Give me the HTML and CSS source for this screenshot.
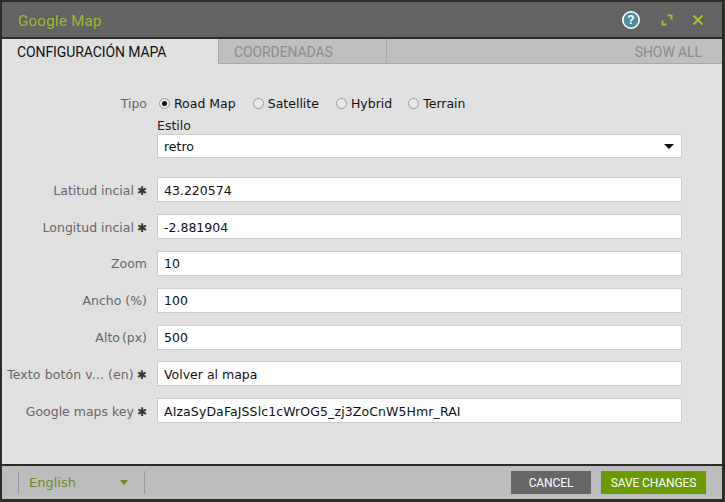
FILE: index.html
```html
<!DOCTYPE html>
<html lang="es">
<head>
<meta charset="utf-8">
<title>Google Map</title>
<link rel="stylesheet" href="styles.css">
</head>
<body>
<div class="dialog">
  <header class="head">
    <h1 class="title">Google Map</h1>
    <div class="tools">
      <svg class="help" width="20" height="20" viewBox="0 0 20 20"><circle cx="10" cy="10" r="8.2" fill="#4a8ea3" stroke="#fff" stroke-width="1.6"/><text x="10" y="14.4" text-anchor="middle" class="help-q">?</text></svg>
      <svg class="expand" width="12" height="12" viewBox="0 0 12 12"><path d="M6.5 1.5H10.5V5.5M1.5 6.5V10.5H5.5" fill="none" stroke="#a4c02f" stroke-width="2"/></svg>
      <svg class="close" width="12" height="12" viewBox="0 0 12 12"><path d="M1.5 1.5L10.5 10.5M10.5 1.5L1.5 10.5" fill="none" stroke="#a4c02f" stroke-width="2"/></svg>
    </div>
  </header>
  <nav class="tabs">
    <div class="tab active">CONFIGURACIÓN MAPA</div>
    <div class="tab other">COORDENADAS</div>
    <div class="showall">SHOW ALL</div>
  </nav>
  <main class="body">
    <div class="radios">
      <span class="lab">Tipo</span>
      <div class="radio-set">
        <span class="radio"><i class="dot on"></i>Road Map</span>
        <span class="radio"><i class="dot"></i>Satellite</span>
        <span class="radio"><i class="dot"></i>Hybrid</span>
        <span class="radio"><i class="dot"></i>Terrain</span>
      </div>
    </div>
    <div class="estilo">
      <div class="estilo-label">Estilo</div>
      <div class="select"><span>retro</span><i class="caret"></i></div>
    </div>
    <div class="fields">
      <div class="row"><span class="lab">Latitud incial<b class="req">✱</b></span><div class="input">43.220574</div></div>
      <div class="row"><span class="lab">Longitud incial<b class="req">✱</b></span><div class="input">-2.881904</div></div>
      <div class="row"><span class="lab">Zoom</span><div class="input">10</div></div>
      <div class="row"><span class="lab">Ancho (%)</span><div class="input">100</div></div>
      <div class="row"><span class="lab tight">Alto (px)</span><div class="input">500</div></div>
      <div class="row"><span class="lab wide">Texto botón v... (en)<b class="req">✱</b></span><div class="input">Volver al mapa</div></div>
      <div class="row"><span class="lab">Google maps key<b class="req">✱</b></span><div class="input key">AIzaSyDaFaJSSlc1cWrOG5_zj3ZoCnW5Hmr_RAI</div></div>
    </div>
  </main>
  <footer class="foot">
    <div class="lang"><span>English</span><i class="lang-caret"></i></div>
    <div class="actions">
      <button class="btn cancel">CANCEL</button>
      <button class="btn save">SAVE CHANGES</button>
    </div>
  </footer>
</div>
</body>
</html>
```
FILE: styles.css
```css
html, body { margin: 0; padding: 0; }
body {
  width: 725px; height: 502px; overflow: hidden; background: #2e2c28;
  font-family: "DejaVu Sans", sans-serif; font-size: 12.5px; color: #111;
}
.dialog { margin: 2px 3px 0 2px; width: 720px; display: flex; flex-direction: column; }
.head {
  height: 35px; background: #636363; display: flex; align-items: center;
  justify-content: space-between; margin-bottom: 2px;
}
.title {
  margin: 2px 0 0 16px; font: 400 15px "Roboto", sans-serif; color: #9fb92f; letter-spacing: .3px;
}
.tools { display: flex; align-items: center; margin-right: 18px; }
.help { margin-right: 20px; }
.help-q { font: 700 12px "Liberation Sans", sans-serif; fill: #fff; }
.expand { margin-right: 19px; }
.tabs {
  height: 25px; background: #bfbfbf; display: flex; box-sizing: border-box;
  border-bottom: 1px solid #a8a8a8; font: 400 14px "Roboto", sans-serif; letter-spacing: -.1px;
}
.tab { display: flex; align-items: center; box-sizing: border-box; }
.tab.active {
  width: 216px; height: 25px; background: #e0e0e0; color: #111; padding-left: 15px;
}
.tab.other {
  width: 169px; color: #8c8c8c; padding: 1px 0 0 15px; border-left: 1px solid #a8a8a8; border-right: 1px solid #a8a8a8;
}
.showall { flex: 1; text-align: right; color: #8c8c8c; padding: 1px 20px 0 0; line-height: 24px; }
.body { height: 400px; background: #e0e0e0; box-sizing: border-box; padding-top: 31px; }
.radios { display: flex; align-items: center; height: 16px; }
.lab {
  width: 145px; text-align: right; color: #666; white-space: nowrap; flex: none;
}
.tight { word-spacing: -2px; }
.wide { letter-spacing: .1px; }
.radio-set { display: flex; margin-left: 12px; color: #111; }
.radio { display: inline-flex; align-items: center; margin-right: 17px; }
.radio:nth-child(3) { margin-right: 16px; }
.dot {
  width: 9px; height: 9px; border: 1px solid #9a9a9a; border-radius: 50%; margin-right: 4px;
  background: #e8e8e8; display: inline-block; position: relative;
}
.dot.on::after {
  content: ""; position: absolute; left: 2px; top: 2px; width: 5px; height: 5px; border-radius: 50%; background: #111;
}
.estilo { margin: 7px 0 0 155px; width: 525px; }
.estilo-label { line-height: 15px; color: #222; }
.select, .input {
  box-sizing: border-box; background: #fff; border: 1px solid #ccc; display: flex; align-items: center;
  width: 525px; padding-left: 6px; color: #111;
}
.select { height: 24px; margin-top: 1px; justify-content: space-between; padding-right: 7px; }
.caret { width: 0; height: 0; border: 5px solid transparent; border-top: 5px solid #111; border-bottom: 0; }
.fields { margin-top: 19.4px; display: flex; flex-direction: column; gap: 11.8px; }
.row { display: flex; align-items: center; height: 25px; }
.row .lab { width: 145px; margin-right: 10px; padding-top: 1px; }
.input { height: 25px; padding-top: 1px; }
.key { letter-spacing: .1px; }
.req { font-weight: 400; font-size: 12px; line-height: 0; color: #333; margin-left: 3px; }
.foot {
  margin-top: 2px; height: 33px; background: #bdbdbd; display: flex; align-items: center; justify-content: space-between;
}
.lang {
  margin-left: 16px; width: 127px; height: 23px; box-sizing: border-box; border-left: 1px solid #9a9a9a; border-right: 1px solid #9a9a9a;
  display: flex; align-items: center; justify-content: space-between; padding: 0 16px 0 10px; color: #6f8a2a; font-size: 13px;
}
.lang-caret { width: 0; height: 0; border: 4.5px solid transparent; border-top: 5px solid #6f8a2a; border-bottom: 0; }
.actions { display: flex; gap: 10px; margin-right: 16px; }
.btn {
  height: 23px; border: 0; padding: 0; color: #fff; font: 400 12px "Roboto", sans-serif; letter-spacing: -.1px;
}
.cancel { width: 80px; background: #666; }
.save { width: 105px; background: #699a00; }
```
